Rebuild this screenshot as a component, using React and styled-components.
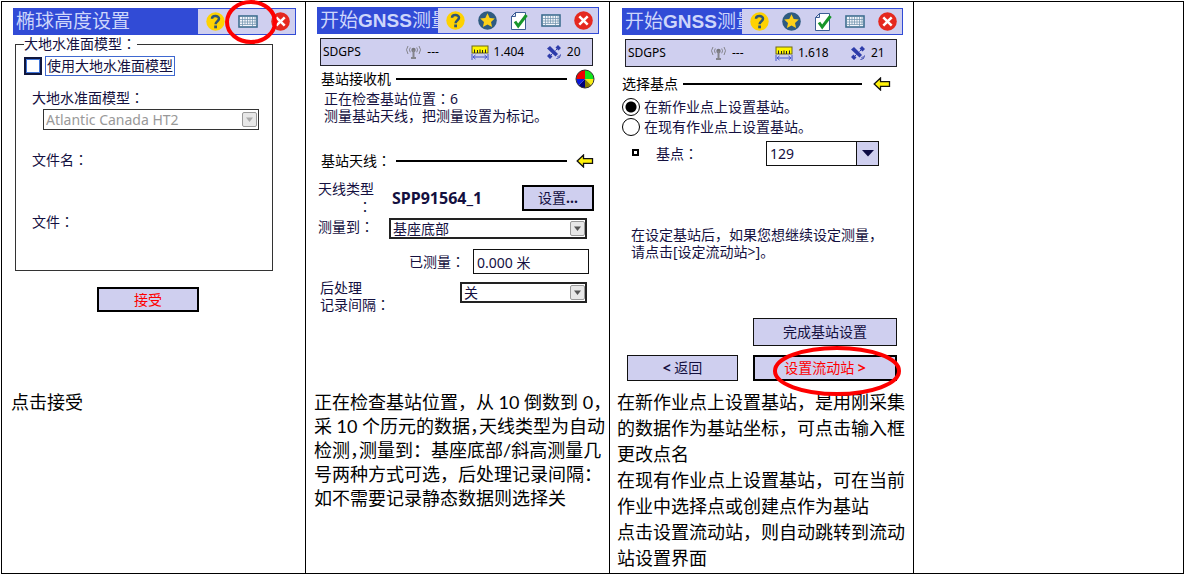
import React from "react";
import styled, { createGlobalStyle } from "styled-components";

const navy = "#14103f";
const lavender = "#cfcfef";
const blue = "#314bd6";
const red = "#fe0000";

const GlobalStyle = createGlobalStyle`
  * { box-sizing: border-box; }
  body { margin: 0; background: #fff; color: #000; }
  button, input, select { font: inherit; color: inherit; margin: 0; border-radius: 0; }
`;

const Page = styled.main`
  padding: 1px 0 0 1px;
  font-family: "Noto Sans", "Noto Sans CJK SC", sans-serif;
`;

const Sheet = styled.div`
  display: grid;
  grid-template-columns: 304fr 304fr 304fr 270fr;
  border: solid #000;
  border-width: 1px 0 1px 1px;
`;

const Cell = styled.section`
  min-width: 0;
  border-right: 1px solid #000;
  padding: ${(p) => p.$top || 5}px ${(p) => p.$right || 10}px 2px ${(p) => p.$left || 11}px;
`;

const Screen = styled.div`
  height: ${(p) => p.$height}px;
  font-size: 14px;
  line-height: 18px;
  color: ${navy};
  white-space: nowrap;
`;

const TitleBar = styled.header`
  position: relative;
  display: flex;
  height: 27px;
  border: 1px solid ${blue};
  background: ${blue};
`;

const Title = styled.h2`
  flex: 1;
  min-width: 0;
  margin: 0;
  padding-left: 2px;
  overflow: hidden;
  font-size: 19px;
  line-height: 25px;
  font-weight: 400;
  color: #ced6fb;
  b {
    font-family: "Liberation Sans", Arial, sans-serif;
    font-weight: 700;
  }
`;

const Tools = styled.div`
  flex: none;
  display: flex;
  justify-content: space-between;
  align-items: center;
  width: ${(p) => p.$width}px;
  padding: 0 5px 0 8px;
  background: ${lavender};
`;

const Tool = styled.button`
  display: flex;
  padding: 0;
  border: 0;
  background: none;
`;

const Ring = styled.svg`
  position: absolute;
  right: ${(p) => p.$right}px;
  top: ${(p) => p.$top}px;
  fill: none;
  stroke: ${red};
  stroke-width: 4;
  pointer-events: none;
`;

const Colon = styled.span`
  font-family: "Noto Sans CJK JP", sans-serif;
  line-height: 1;
`;

const GeoidGroup = styled.fieldset`
  margin: 1px 23px 0 2px;
  padding: 4px 13px 39px 8px;
  border: 1px solid #333;
  legend {
    padding: 0 1px 0 0;
    line-height: 16px;
  }
`;

const CheckRow = styled.div`
  display: flex;
  align-items: center;
  gap: 3px;
  height: 20px;
  input {
    appearance: none;
    width: 18px;
    height: 18px;
    border: 2px solid #10163c;
    outline: 1px solid #3f74d8;
    outline-offset: -3px;
    background: #fff;
  }
  label {
    padding: 0 1px;
    border: 1px solid #3f68d0;
  }
`;

const FieldName = styled.label`
  display: block;
  margin: ${(p) => p.$gap}px 0 0 8px;
`;

const SelectBox = styled.div`
  position: relative;
  height: 21px;
  margin: ${(p) => p.$margin || "0"};
  color: ${(p) => (p.$muted ? "#999" : navy)};
  select {
    appearance: none;
    display: block;
    width: 100%;
    height: 100%;
    padding: 0 20px 0 2px;
    border: ${(p) => (p.$muted ? "1px solid #333" : "2px solid #222")};
    background: #fff;
    opacity: 1;
    line-height: 17px;
  }
  svg {
    position: absolute;
    right: 2px;
    top: 3px;
    pointer-events: none;
  }
`;

const PushButton = styled.button`
  display: block;
  width: ${(p) => p.$width}px;
  height: ${(p) => p.$height || 25}px;
  margin: ${(p) => p.$margin || "0"};
  padding: 0;
  border: ${(p) => (p.$strong ? "2px solid #000" : "1px solid #111")};
  background: ${lavender};
  color: ${(p) => (p.$hot ? red : navy)};
  line-height: 18px;
`;

const StatusBar = styled.div`
  display: grid;
  grid-template-columns: 82fr 65fr 75fr 46fr;
  align-items: center;
  height: 28px;
  margin: 4px 6px 0 3px;
  padding-left: 2px;
  border: 1px solid #22222a;
  background: ${lavender};
  font-size: 12px;
  color: #000;
`;

const Reading = styled.span`
  display: flex;
  align-items: center;
  gap: 5px;
`;

const Heading = styled.div`
  display: flex;
  align-items: center;
  height: 20px;
  margin: ${(p) => p.$margin};
  color: #000;
  h3 {
    width: ${(p) => p.$label}px;
    margin: 0;
    font-size: 14px;
    font-weight: 400;
  }
  hr {
    flex: 1;
    height: 2px;
    margin: 0 ${(p) => p.$gap || 9}px 0 0;
    border: 0;
    background: #000;
  }
`;

const Message = styled.p`
  margin: ${(p) => p.$margin};
  line-height: 17px;
`;

const Row = styled.div`
  display: flex;
  align-items: ${(p) => p.$align || "flex-start"};
  margin: ${(p) => p.$margin};
`;

const RowLabel = styled.label`
  flex: none;
  width: ${(p) => p.$width}px;
  line-height: ${(p) => p.$line || 18}px;
`;

const HangingColon = styled.div`
  padding-left: 40px;
`;

const Antenna = styled.strong`
  flex: 1;
  margin-top: 9px;
  font-size: 16px;
`;

const Fill = styled.div`
  flex: 1;
  min-width: 0;
`;

const TextInput = styled.input`
  width: 116px;
  height: 25px;
  padding: 0 3px;
  border: 1px solid #111;
  background: #fff;
`;

const Radio = styled.label`
  display: flex;
  align-items: center;
  gap: 4px;
  height: 20px;
  input {
    appearance: none;
    width: 18px;
    height: 18px;
    border: 1px solid #000;
    border-radius: 50%;
    background: #fff;
  }
  input:checked {
    background: radial-gradient(circle, #000 0 5px, #fff 6px);
  }
`;

const RadioGroup = styled.div`
  margin-top: 3px;
`;

const Bullet = styled.i`
  width: 7px;
  height: 7px;
  margin: 0 17px 2px 10px;
  border: 2px solid #000;
`;

const Combo = styled.div`
  display: flex;
  width: 113px;
  height: 25px;
  border: 1px solid #111;
  input {
    flex: 1;
    min-width: 0;
    padding: 0 3px;
    border: 0;
  }
  button {
    display: flex;
    align-items: center;
    justify-content: center;
    width: 22px;
    padding: 0;
    border: 0;
    border-left: 1px solid #111;
    background: ${lavender};
  }
`;

const ButtonBar = styled.div`
  position: relative;
  display: flex;
  justify-content: space-between;
  margin: 9px 6px 0 5px;
`;

const Caption = styled.p`
  margin: 0 -8px 0 ${(p) => p.$pull || -2}px;
  font-family: Lato, "Noto Sans CJK SC", sans-serif;
  font-weight: 400;
  font-size: 18px;
  line-height: ${(p) => p.$line || 24}px;
  white-space: nowrap;
`;

const Line = styled.span`
  display: block;
`;

const NarrowMark = styled.span`
  font-feature-settings: "halt";
`;

function HelpIcon() {
  return (
    <svg width="19" height="19" viewBox="0 0 19 19">
      <circle cx="9.5" cy="9.5" r="9.2" fill="#fed201" />
      <path d="M6 6.7C6 3.3 13 3 13 6.8C13 9.2 9.6 9.2 9.6 12.2" fill="none" stroke="#2f5573" strokeWidth="2.5" />
      <rect x="8.2" y="13.5" width="2.8" height="2.8" fill="#2f5573" />
    </svg>
  );
}

function StarIcon() {
  return (
    <svg width="19" height="19" viewBox="0 0 19 19">
      <circle cx="9.5" cy="9.5" r="9.3" fill="#2f5b80" />
      <path d="M9.5 2.2L11.7 7L16.8 7.5L13 11L14.1 16L9.5 13.4L4.9 16L6 11L2.2 7.5L7.3 7Z" fill="#fdd017" />
    </svg>
  );
}

function TaskIcon() {
  return (
    <svg width="18" height="20" viewBox="0 0 18 20">
      <path d="M5.5 1.5H15.5V18.5H1.5V5.5Z" fill="#fff" stroke="#3c5c94" />
      <path d="M5.5 1.5V5.5H1.5Z" fill="#dfe5f3" stroke="#3c5c94" />
      <path d="M5 10.5L8.2 15L16.5 4" fill="none" stroke="#17952a" strokeWidth="3" />
    </svg>
  );
}

function KeyboardIcon() {
  return (
    <svg width="20" height="13" viewBox="0 0 20 13">
      <rect x="1" y="1" width="18" height="11" fill="#f3f5fb" stroke="#3f6e90" strokeWidth="1.6" />
      <path d="M2 4.5H18M2 7H18M2 9.5H18M4.5 2V9.5M7 2V9.5M9.5 2V9.5M12 2V9.5M14.5 2V11M17 2V9.5M4.5 9.5V11" stroke="#6c8fab" strokeWidth=".7" />
    </svg>
  );
}

function CloseIcon() {
  return (
    <svg width="19" height="19" viewBox="0 0 19 19">
      <circle cx="9.5" cy="9.5" r="9.3" fill="#e5281f" />
      <path d="M5.3 5.3L13.7 13.7M13.7 5.3L5.3 13.7" stroke="#fff" strokeWidth="2.5" />
    </svg>
  );
}

function RadioIcon() {
  return (
    <svg width="17" height="14" viewBox="0 0 17 14" fill="none" stroke="#85858c">
      <path d="M3 1Q0 4.5 3 9M5.3 2.5Q3.6 4.7 5.3 7.3M14 1Q17 4.5 14 9M11.7 2.5Q13.4 4.7 11.7 7.3" />
      <circle cx="8.5" cy="5" r="2.2" fill="#77777d" stroke="none" />
      <path d="M8.5 5V12M6 13H11" strokeWidth="2" />
    </svg>
  );
}

function RulerIcon() {
  return (
    <svg width="18" height="15" viewBox="0 0 18 15">
      <rect x="1" y="1" width="16" height="7" fill="#fff500" stroke="#6c6917" />
      <path d="M3.5 4.5V8M6.5 5V8M9 4.5V8M11.5 5V8M14.5 4.5V8" stroke="#222" />
      <path d="M1 9V15M17 9V15M2 12H16M4.5 10L2 12L4.5 14M13.5 10L16 12L13.5 14" fill="none" stroke="#4457c8" />
    </svg>
  );
}

function SatelliteIcon() {
  return (
    <svg width="16" height="16" viewBox="0 0 16 16" fill="#2d3baa">
      <path d="M1 4.5L4 2L12 10L9.5 12.5Z" />
      <path d="M9.5 3.5L12 1L15 4L12.5 6.5ZM1 12L3.5 9.5L6.5 12.5L4 15Z" />
      <path d="M9.5 6.5L11 5M5 11L6.5 9.5M14.5 10.5Q14.5 14.5 10.5 14.5M13 11.5L11.5 13" fill="none" stroke="#2d3baa" />
    </svg>
  );
}

function WheelIcon() {
  return (
    <svg width="20" height="20" viewBox="0 0 20 20">
      <path d="M10 10V1A9 9 0 0 0 1 10Z" fill="#f00000" />
      <path d="M10 10H19A9 9 0 0 0 10 1Z" fill="#11e51d" />
      <path d="M10 10L16.4 16.4A9 9 0 0 0 19 10Z" fill="#f7ed13" />
      <path d="M10 10V19A9 9 0 0 0 16.4 16.4Z" fill="#8b8000" />
      <path d="M10 10L3.6 16.4A9 9 0 0 0 10 19Z" fill="#000078" />
      <path d="M10 10H1A9 9 0 0 0 3.6 16.4Z" fill="#0a18dc" />
      <circle cx="10" cy="10" r="9" fill="none" stroke="#333" />
    </svg>
  );
}

function ArrowIcon() {
  return (
    <svg width="18" height="14" viewBox="0 0 18 14">
      <path d="M1.2 7L7.5 1V4.7H16.5V9.3H7.5V13Z" fill="#fff20a" stroke="#111" strokeWidth="1.3" />
    </svg>
  );
}

function DropIcon({ muted }) {
  return (
    <svg width="15" height="15" viewBox="0 0 15 15">
      <rect x=".5" y=".5" width="14" height="14" rx="1.5" fill="#e7e7e7" stroke="#999" />
      <path d="M4 5.5H11L7.5 10Z" fill={muted ? "#aaa" : "#555"} />
    </svg>
  );
}

function GnssTitle() {
  return (
    <TitleBar>
      <Title>开始<b>GNSS</b>测量</Title>
      <Tools $width={160}>
        <Tool aria-label="帮助"><HelpIcon /></Tool>
        <Tool aria-label="收藏"><StarIcon /></Tool>
        <Tool aria-label="任务"><TaskIcon /></Tool>
        <Tool aria-label="键盘"><KeyboardIcon /></Tool>
        <Tool aria-label="关闭"><CloseIcon /></Tool>
      </Tools>
    </TitleBar>
  );
}

function Status({ precision, satellites }) {
  return (
    <StatusBar>
      <span>SDGPS</span>
      <Reading><RadioIcon />---</Reading>
      <Reading><RulerIcon />{precision}</Reading>
      <Reading><SatelliteIcon />{satellites}</Reading>
    </StatusBar>
  );
}

function EllipsoidScreen() {
  return (
    <Screen $height={382}>
      <TitleBar>
        <Title>椭球高度设置</Title>
        <Tools $width={97}>
          <Tool aria-label="帮助"><HelpIcon /></Tool>
          <Tool aria-label="键盘"><KeyboardIcon /></Tool>
          <Tool aria-label="关闭"><CloseIcon /></Tool>
        </Tools>
        <Ring $right={18} $top={-10} width="52" height="46">
          <ellipse cx="26" cy="23" rx="24" ry="20" />
        </Ring>
      </TitleBar>
      <GeoidGroup>
        <legend>大地水准面模型<Colon>：</Colon></legend>
        <CheckRow>
          <input type="checkbox" id="use-geoid" />
          <label htmlFor="use-geoid">使用大地水准面模型</label>
        </CheckRow>
        <FieldName htmlFor="geoid" $gap={13}>大地水准面模型<Colon>：</Colon></FieldName>
        <SelectBox $muted $margin="2px 0 0 19px">
          <select id="geoid" disabled><option>Atlantic Canada HT2</option></select>
          <DropIcon muted />
        </SelectBox>
        <FieldName as="div" $gap={21}>文件名<Colon>：</Colon></FieldName>
        <FieldName as="div" $gap={44}>文件<Colon>：</Colon></FieldName>
      </GeoidGroup>
      <PushButton $strong $hot $width={102} $margin="16px 0 0 84px">接受</PushButton>
    </Screen>
  );
}

function ReceiverScreen() {
  return (
    <Screen $height={383}>
      <GnssTitle />
      <Status precision="1.404" satellites="20" />
      <Heading $margin="3px 4px 0 4px" $label={75} $gap={8}>
        <h3>基站接收机</h3><hr /><WheelIcon />
      </Heading>
      <Message $margin="1px 0 0 7px">正在检查基站位置<Colon>：</Colon>6<br />测量基站天线，把测量设置为标记。</Message>
      <Heading $margin="27px 5px 0 4px" $label={75}>
        <h3>基站天线<Colon>：</Colon></h3><hr /><ArrowIcon />
      </Heading>
      <Row $margin="9px 5px 0 1px">
        <RowLabel as="div" $width={74}>天线类型<HangingColon><Colon>：</Colon></HangingColon></RowLabel>
        <Antenna>SPP91564_1</Antenna>
        <PushButton $strong $width={72} $height={26} $margin="5px 0 0">设置<b>...</b></PushButton>
      </Row>
      <Row $margin="2px 12px 0 1px">
        <RowLabel htmlFor="measure-to" $width={71}>测量到<Colon>：</Colon></RowLabel>
        <Fill>
          <SelectBox>
            <select id="measure-to"><option>基座底部</option></select>
            <DropIcon />
          </SelectBox>
        </Fill>
      </Row>
      <Row $align="center" $margin="10px 10px 0 92px">
        <Fill><RowLabel htmlFor="measured">已测量<Colon>：</Colon></RowLabel></Fill>
        <TextInput id="measured" defaultValue="0.000 米" />
      </Row>
      <Row $margin="5px 12px 0 3px">
        <RowLabel htmlFor="interval" $width={140} $line={17}>后处理<br />记录间隔<Colon>：</Colon></RowLabel>
        <Fill>
          <SelectBox $margin="3px 0 0">
            <select id="interval"><option>关</option></select>
            <DropIcon />
          </SelectBox>
        </Fill>
      </Row>
    </Screen>
  );
}

function BasePointScreen() {
  return (
    <Screen $height={381}>
      <GnssTitle />
      <Status precision="1.618" satellites="21" />
      <Heading $margin="7px 12px 0 0" $label={61} $gap={11}>
        <h3>选择基点</h3><hr /><ArrowIcon />
      </Heading>
      <RadioGroup>
        <Radio><input type="radio" name="base" defaultChecked />在新作业点上设置基站。</Radio>
        <Radio><input type="radio" name="base" />在现有作业点上设置基站。</Radio>
      </RadioGroup>
      <Row $align="center" $margin="4px 24px 0 0">
        <Bullet />
        <Fill><label htmlFor="base-point">基点<Colon>：</Colon></label></Fill>
        <Combo>
          <input id="base-point" defaultValue="129" />
          <button aria-label="选择基点">
            <svg width="12" height="7" viewBox="0 0 12 7"><path d="M0 0H12L6 6.5Z" fill="#0c0a44" /></svg>
          </button>
        </Combo>
      </Row>
      <Message $margin="60px 0 0 9px">在设定基站后，如果您想继续设定测量，<br />请点击[设定流动站&gt;]。</Message>
      <PushButton $width={144} $height={28} $margin="58px 6px 0 auto">完成基站设置</PushButton>
      <ButtonBar>
        <PushButton $width={111} $height={26}><b>&lt;</b> 返回</PushButton>
        <PushButton $strong $hot $width={144} $height={26}>设置流动站 <b>&gt;</b></PushButton>
        <Ring $right={-5} $top={-10} width="130" height="52">
          <ellipse cx="65" cy="26" rx="62" ry="23" />
        </Ring>
      </ButtonBar>
    </Screen>
  );
}

export default function App() {
  return (
    <Page>
      <GlobalStyle />
      <Sheet>
        <Cell $top={6} $right={9}>
          <EllipsoidScreen />
          <Caption><Line>点击接受</Line></Caption>
        </Cell>
        <Cell>
          <ReceiverScreen />
          <Caption $pull={-3}>
            <Line>正在检查基站位置，从 10 倒数到 0，</Line>
            <Line>采 10 个历元的数据<NarrowMark>，</NarrowMark>天线类型为自动</Line>
            <Line>检测<NarrowMark>，</NarrowMark>测量到：基座底部/斜高测量几</Line>
            <Line>号两种方式可选，后处理记录间隔：</Line>
            <Line>如不需要记录静态数据则选择关</Line>
          </Caption>
        </Cell>
        <Cell $top={6} $left={12}>
          <BasePointScreen />
          <Caption $line={26} $pull={-5}>
            <Line>在新作业点上设置基站，是用刚采集</Line>
            <Line>的数据作为基站坐标，可点击输入框</Line>
            <Line>更改点名</Line>
            <Line>在现有作业点上设置基站，可在当前</Line>
            <Line>作业中选择点或创建点作为基站</Line>
            <Line>点击设置流动站，则自动跳转到流动</Line>
            <Line>站设置界面</Line>
          </Caption>
        </Cell>
        <Cell />
      </Sheet>
    </Page>
  );
}
